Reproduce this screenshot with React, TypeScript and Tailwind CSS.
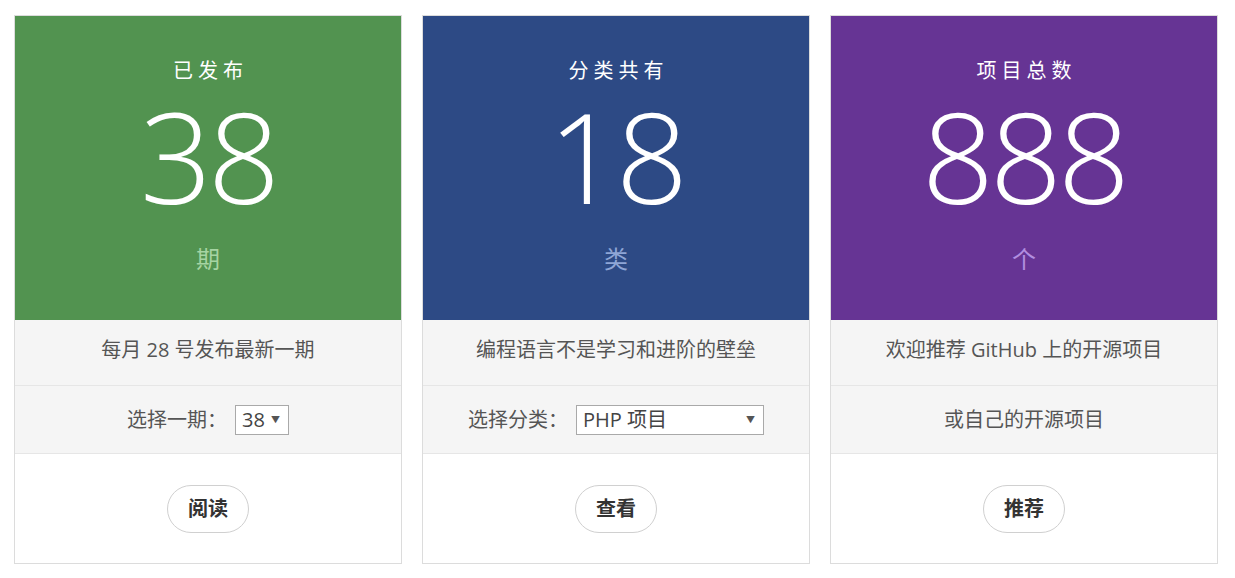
import React from "react";

const font = { fontFamily: '"Open Sans", "Noto Sans CJK SC", sans-serif' };

function Card({
  bg,
  unitColor,
  title,
  num,
  unit,
  line1,
  row2,
  btn,
}: {
  bg: string;
  unitColor: string;
  title: string;
  num: string;
  unit: string;
  line1: string;
  row2: React.ReactNode;
  btn: string;
}) {
  return (
    <div className="w-[388px] h-[549px] border border-[#dcdcdc] bg-white flex flex-col">
      <div className={`${bg} h-[304px] flex flex-col items-center text-white`}>
        <div className="mt-[42px] text-[20px] leading-[26px] tracking-[5px] pl-[5px]">{title}</div>
        <div
          className="mt-[21px] h-[100px] text-[126px] leading-[100px] font-light tracking-[-4px] pr-[-4px]"
          style={{ fontFamily: '"Open Sans", sans-serif' }}
        >
          {num}
        </div>
        <div className={`mt-[39px] text-[24px] leading-[30px] ${unitColor}`}>{unit}</div>
      </div>
      <div className="h-[66px] bg-[#f5f5f5] border-b border-[#e6e6e6] flex items-center justify-center pb-[5px] text-[20px] text-[#555]">
        {line1}
      </div>
      <div className="h-[68px] bg-[#f5f5f5] border-b border-[#e6e6e6] flex items-center justify-center text-[20px] text-[#555]">
        {row2}
      </div>
      <div className="flex-1 flex items-center justify-center">
        <div className="w-[82px] h-[48px] rounded-full border border-[#d0d0d0] flex items-center justify-center text-[20px] font-bold text-[#333]">
          {btn}
        </div>
      </div>
    </div>
  );
}

function Select({ w, label }: { w: string; label: string }) {
  return (
    <div
      className={`${w} h-[30px] border border-[#a9a9a9] bg-white flex items-center justify-between pl-[6px] pr-[8px] text-[20px] text-[#444]`}
    >
      <span>{label}</span>
      <span className="text-[9px] text-[#555]">▼</span>
    </div>
  );
}

export default function App() {
  return (
    <div className="w-[1235px] h-[578px] bg-white pt-[15px] pl-[14px]" style={font}>
      <div className="flex gap-[20px]">
        <Card
          bg="bg-[#529350]"
          unitColor="text-[#a6d4a2]"
          title="已发布"
          num="38"
          unit="期"
          line1="每月 28 号发布最新一期"
          row2={
            <div className="flex items-center">
              <span className="mr-[8px]">选择一期：</span>
              <Select w="w-[54px]" label="38" />
            </div>
          }
          btn="阅读"
        />
        <Card
          bg="bg-[#2d4a85]"
          unitColor="text-[#8fa6d6]"
          title="分类共有"
          num="18"
          unit="类"
          line1="编程语言不是学习和进阶的壁垒"
          row2={
            <div className="flex items-center">
              <span className="mr-[8px]">选择分类：</span>
              <Select w="w-[188px]" label="PHP 项目" />
            </div>
          }
          btn="查看"
        />
        <Card
          bg="bg-[#663494]"
          unitColor="text-[#b18ee0]"
          title="项目总数"
          num="888"
          unit="个"
          line1="欢迎推荐 GitHub 上的开源项目"
          row2={<span>或自己的开源项目</span>}
          btn="推荐"
        />
      </div>
    </div>
  );
}
